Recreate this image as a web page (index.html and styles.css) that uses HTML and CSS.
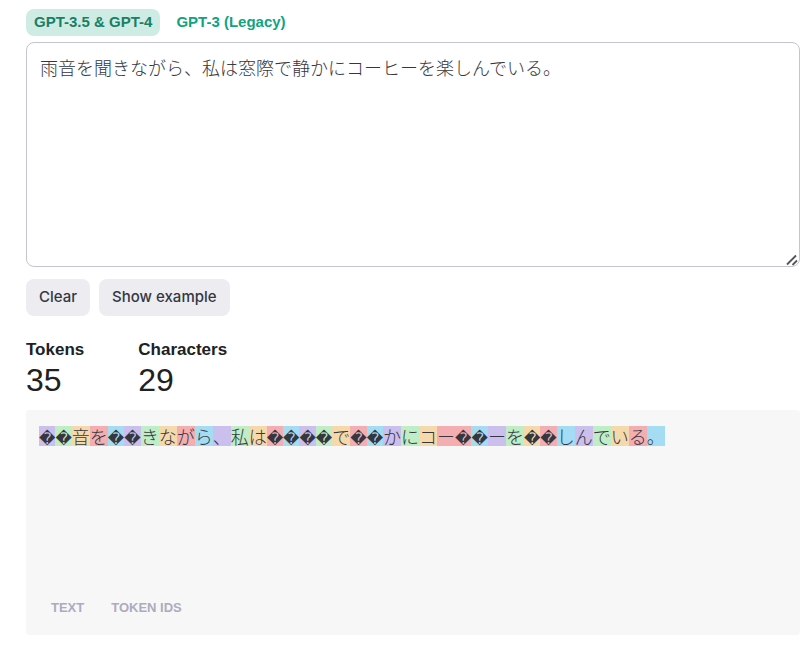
FILE: index.html
```html
<!DOCTYPE html>
<html lang="en">
  <head>
    <meta charset="UTF-8" />
    <meta name="viewport" content="width=device-width, initial-scale=1.0" />
    <title>Tokenizer</title>
    <link rel="stylesheet" href="styles.css">
  </head>
  <body>
    <main class="tokenizer">
      <div class="models">
        <button type="button" class="model current">GPT-3.5 &amp; GPT-4</button>
        <button type="button" class="model">GPT-3 (Legacy)</button>
      </div>
      <div class="field">
        <textarea class="input" aria-label="Text to tokenize" lang="ja" spellcheck="false">雨音を聞きながら、私は窓際で静かにコーヒーを楽しんでいる。</textarea>
        <svg class="grip" width="12" height="12" viewBox="0 0 12 12" aria-hidden="true">
          <path d="M1 10.5L10 1.5M6.5 11L11 6.5" fill="none" stroke="#555" stroke-width="1.8" />
        </svg>
      </div>
      <div class="actions">
        <button type="button" class="btn">Clear</button>
        <button type="button" class="btn">Show example</button>
      </div>
      <dl class="stats">
        <div class="stat">
          <dt>Tokens</dt>
          <dd>35</dd>
        </div>
        <div class="stat">
          <dt>Characters</dt>
          <dd>29</dd>
        </div>
      </dl>
      <section class="output">
        <div class="tokens" lang="ja"><span><b>�</b></span><span><b>�</b></span><span>音</span><span>を</span><span><b>�</b></span><span><b>�</b></span><span>き</span><span>な</span><span>が</span><span>ら</span><span>、</span><span>私</span><span>は</span><span><b>�</b></span><span><b>�</b></span><span><b>�</b></span><span><b>�</b></span><span>で</span><span><b>�</b></span><span><b>�</b></span><span>か</span><span>に</span><span>コ</span><span>ー<b>�</b></span><span><b>�</b></span><span>ー</span><span>を</span><span><b>�</b></span><span><b>�</b></span><span>し</span><span>ん</span><span>で</span><span>い</span><span>る</span><span>。</span></div>
        <div class="views">
          <button type="button" class="view">TEXT</button>
          <button type="button" class="view">TOKEN IDS</button>
        </div>
      </section>
    </main>
  </body>
</html>
```
FILE: styles.css
```css
* {
  margin: 0;
  padding: 0;
  box-sizing: border-box;
}
body {
  background-color: #fff;
  color: #202123;
  font-family: "Liberation Sans", Arial, sans-serif;
}
button {
  border: none;
  background: none;
  font-family: inherit;
  cursor: pointer;
}
.tokenizer {
  padding: 9px 10px 16px 26px;
}
.models {
  display: flex;
  gap: 8px;
  margin-bottom: 6px;
}
.model {
  padding: 0 8px 1px;
  border-radius: 8px;
  color: #10a37f;
  font-size: 15px;
  font-weight: 700;
  line-height: 26px;
}
.model.current {
  background-color: #cfece4;
  color: #1a7f64;
}
.field {
  position: relative;
}
.input {
  display: block;
  width: 100%;
  height: 225px;
  padding: 10px 13px;
  border: 1px solid #c5c5d2;
  border-radius: 8px;
  outline: none;
  resize: vertical;
  color: #353740;
  font-family: "Noto Sans CJK JP", sans-serif;
  font-size: 18px;
  font-weight: 300;
  line-height: 28px;
}
.input::-webkit-resizer {
  background: transparent;
}
.grip {
  position: absolute;
  right: 2px;
  bottom: 1px;
  pointer-events: none;
}
.actions {
  display: flex;
  gap: 9px;
  margin-top: 12px;
}
.btn {
  padding: 0 13px 2px;
  border-radius: 8px;
  background-color: #ececf1;
  color: #353740;
  font-family: Inter, sans-serif;
  font-size: 15px;
  font-weight: 500;
  line-height: 35px;
}
.stats {
  display: flex;
  gap: 54px;
  margin: 22px 0 11px;
}
.stat dt {
  font-size: 17px;
  font-weight: 700;
  line-height: 24px;
}
.stat dd {
  font-size: 32px;
  line-height: 37px;
}
.output {
  display: flex;
  flex-direction: column;
  justify-content: space-between;
  min-height: 225px;
  padding: 16px 13px;
  border-radius: 3px;
  background-color: #f7f7f8;
}
.tokens {
  display: flex;
  flex-wrap: wrap;
  color: #353740;
  font-family: "Noto Sans CJK JP", sans-serif;
  font-size: 18px;
  font-weight: 300;
}
.tokens span {
  height: 20px;
  line-height: 20px;
}
.tokens b {
  font-family: "DejaVu Sans", sans-serif;
  font-size: 16px;
  font-weight: 400;
}
.tokens span:nth-child(5n + 1) {
  background-color: #cbbfed;
}
.tokens span:nth-child(5n + 2) {
  background-color: #bfedc5;
}
.tokens span:nth-child(5n + 3) {
  background-color: #f6d9ab;
}
.tokens span:nth-child(5n + 4) {
  background-color: #f4aeb1;
}
.tokens span:nth-child(5n) {
  background-color: #a4dcf3;
}
.views {
  display: flex;
  gap: 27px;
  padding: 0 12px;
}
.view {
  color: #acacbe;
  font-size: 13px;
  font-weight: 700;
  line-height: 22px;
}
```
